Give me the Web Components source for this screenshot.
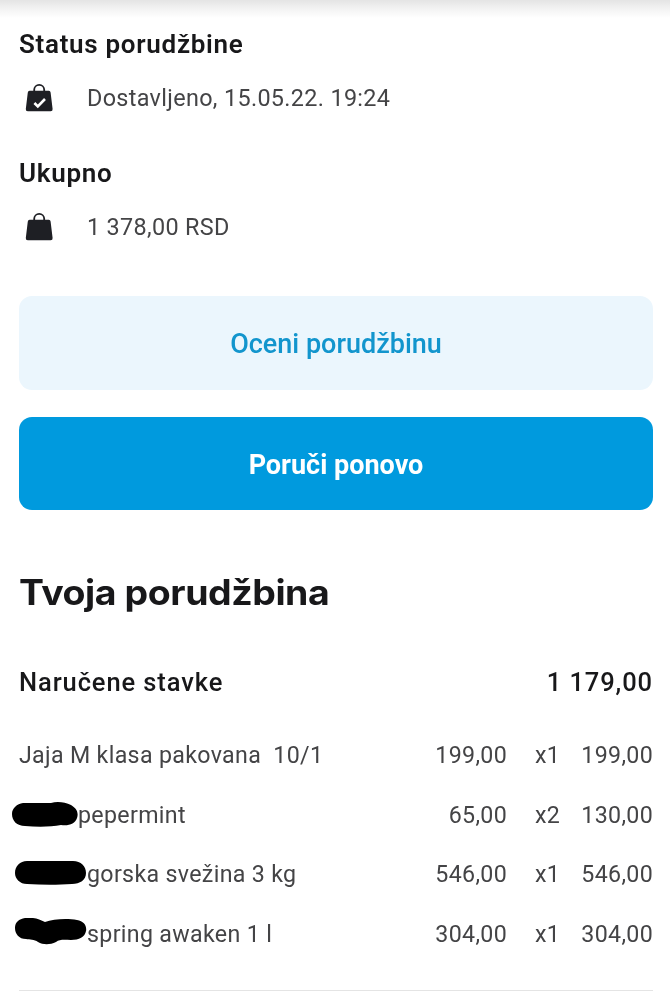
<!DOCTYPE html>
<html lang="sr">
<head>
<meta charset="utf-8">
<title>Porudžbina</title>
<style>
  html, body { margin: 0; padding: 0; background: #fff; }
  body { font-family: Roboto, "Liberation Sans", sans-serif; width: 670px; height: 991px; overflow: hidden; }
</style>
</head>
<body>
<order-page>
  <info-block slot="infos" heading="Status porudžbine" icon="check">Dostavljeno, 15.05.22. 19:24</info-block>
  <info-block slot="infos" heading="Ukupno" icon="bag">1 378,00 RSD</info-block>
  <action-button slot="actions" kind="soft">Oceni porudžbinu</action-button>
  <action-button slot="actions" kind="solid">Poruči ponovo</action-button>
  <order-items heading="Tvoja porudžbina" label="Naručene stavke" sum="1 179,00">
    <item-row price="199,00" qty="x1" total="199,00">Jaja M klasa pakovana&nbsp; 10/1</item-row>
    <item-row price="65,00" qty="x2" total="130,00" blob="a">pepermint</item-row>
    <item-row price="546,00" qty="x1" total="546,00" blob="b">gorska svežina 3 kg</item-row>
    <item-row price="304,00" qty="x1" total="304,00" blob="c">spring awaken 1 l</item-row>
  </order-items>
</order-page>

<script>
// order-page: top shadow + the page column
class OrderPage extends HTMLElement {
  constructor() {
    super();
    this.attachShadow({ mode: 'open' });
  }
  connectedCallback() {
    this.shadowRoot.innerHTML = `
      <style>
        :host { display: block; height: 991px; box-sizing: border-box; padding: 26px 17px 0 19px;
          background: linear-gradient(#e4e4e4 0, #f3f3f3 9px, #fff 18px) no-repeat; filter: blur(.45px); }
        .infos { display: flex; flex-direction: column; gap: 39px; }
        .actions { display: flex; flex-direction: column; gap: 27px; margin-top: 51px; }
      </style>
      <div class="infos"><slot name="infos"></slot></div>
      <div class="actions"><slot name="actions"></slot></div>
      <slot></slot>
    `;
  }
}

const BAG_ICONS = {
  bag: '',
  check: '<path d="M9.4 19l3.4 3.4 7.2-7.4" fill="none" stroke="#fff" stroke-width="2.6"/>'
};

class InfoBlock extends HTMLElement {
  constructor() {
    super();
    this.attachShadow({ mode: 'open' });
  }
  connectedCallback() {
    const mark = BAG_ICONS[this.getAttribute('icon')] || '';
    this.shadowRoot.innerHTML = `
      <style>
        :host { display: block; }
        h3 { margin: 0; font: 600 26px/36px Roboto, sans-serif; letter-spacing: .7px; color: #18181a; }
        .row { display: flex; align-items: center; height: 36px; margin-top: 18px; padding-left: 6px; }
        svg { width: 28px; height: 28px; flex: none; margin-right: 34px; }
        .text { font: 400 23.4px/36px Roboto, sans-serif; letter-spacing: .33px; color: #444446; }
      </style>
      <h3>${this.getAttribute('heading')}</h3>
      <div class="row">
        <svg viewBox="0 0 28 28">
          <path d="M9.2 8V5.8a5 4.9 0 0 1 10 0V8" fill="none" stroke="#1e1f24" stroke-width="1.8"/>
          <path d="M4.6 6.8h19.2a1.8 1.8 0 0 1 1.8 1.6L27.6 25a2 2 0 0 1-2 2.2H2.8A2 2 0 0 1 .8 25L2.8 8.4a1.8 1.8 0 0 1 1.8-1.6z" fill="#1e1f24"/>
          ${mark}
        </svg>
        <span class="text"><slot></slot></span>
      </div>
    `;
  }
}

class ActionButton extends HTMLElement {
  constructor() {
    super();
    this.attachShadow({ mode: 'open' });
  }
  connectedCallback() {
    this.shadowRoot.innerHTML = `
      <style>
        :host { display: flex; align-items: center; justify-content: center; box-sizing: border-box; height: 94px; padding-top: 3px;
          border-radius: 13px; font: 500 27px/1 Roboto, sans-serif; }
        :host([kind=soft]) { background: #ebf6fd; color: #1295cd; }
        :host([kind=solid]) { background: #009ade; color: #fff; font-weight: 700; height: 93px; }
      </style>
      <slot></slot>
    `;
  }
}

class OrderItems extends HTMLElement {
  constructor() {
    super();
    this.attachShadow({ mode: 'open' });
  }
  connectedCallback() {
    this.shadowRoot.innerHTML = `
      <style>
        :host { display: block; margin-top: 56px; }
        h2 { margin: 0; width: fit-content; font: 700 35px/52px Inter, sans-serif; letter-spacing: -.4px; color: #18181a;
          transform: scaleX(1.07); transform-origin: left center; }
        .head { display: flex; justify-content: space-between; margin-top: 46px; font: 500 25.5px/36px Roboto, sans-serif; letter-spacing: .9px; color: #18181a; }
        .list { display: flex; flex-direction: column; gap: 23.5px; margin-top: 37px; }
        .rule { height: 1px; background: #e4e4e4; margin-top: 38px; }
      </style>
      <h2>${this.getAttribute('heading')}</h2>
      <div class="head"><span>${this.getAttribute('label')}</span><span>${this.getAttribute('sum')}</span></div>
      <div class="list"><slot></slot></div>
      <div class="rule"></div>
    `;
  }
}

// censored marks in front of the item names
const BLOBS = {
  a: { w: 66, ml: -7, mt: 0, d: 'M11 2h28c6-2 14-1 20 2 5 3 8 7 6 13-2 6-8 8-16 7-10 2-24 2-36 1C5 25 0 20 0 13 0 7 5 3 11 2z' },
  b: { w: 72, ml: -4, mt: 0, d: 'M12 1h46c8 0 13 5 13 12s-6 11-14 11c-14 1-30 1-45 0C5 24 0 19 0 13 0 6 5 1 12 1z' },
  c: { w: 72, ml: -4, mt: -3, d: 'M10 0c8-1 14 1 20 4 8-3 22-4 32-2 7 1 10 6 9 11-1 6-7 9-15 9-6 0-11-1-15 2-6 3-13 3-18 0-4-3-8-2-12-3C4 21 0 16 0 10 0 4 4 1 10 0z' }
};

class ItemRow extends HTMLElement {
  constructor() {
    super();
    this.attachShadow({ mode: 'open' });
  }
  connectedCallback() {
    const blob = BLOBS[this.getAttribute('blob')];
    const mark = blob
      ? `<svg style="margin:${blob.mt}px 0 0 ${blob.ml}px" width="${blob.w}" height="28" viewBox="0 0 ${blob.w} 28"><path d="${blob.d}" fill="#000"/></svg>`
      : '';
    this.shadowRoot.innerHTML = `
      <style>
        :host { display: grid; grid-template-columns: 1fr 82px 28px 46px 72px; height: 36px; align-items: center;
          font: 400 23.2px/36px Roboto, sans-serif; letter-spacing: .33px; color: #444446; }
        .name { display: flex; align-items: center; white-space: nowrap; }
        svg { flex: none; }
        .num { text-align: right; }
      </style>
      <div class="name">${mark}<span><slot></slot></span></div>
      <div class="num">${this.getAttribute('price')}</div>
      <div></div>
      <div>${this.getAttribute('qty')}</div>
      <div class="num">${this.getAttribute('total')}</div>
    `;
  }
}

customElements.define('order-page', OrderPage);
customElements.define('info-block', InfoBlock);
customElements.define('action-button', ActionButton);
customElements.define('order-items', OrderItems);
customElements.define('item-row', ItemRow);
</script>
</body>
</html>
